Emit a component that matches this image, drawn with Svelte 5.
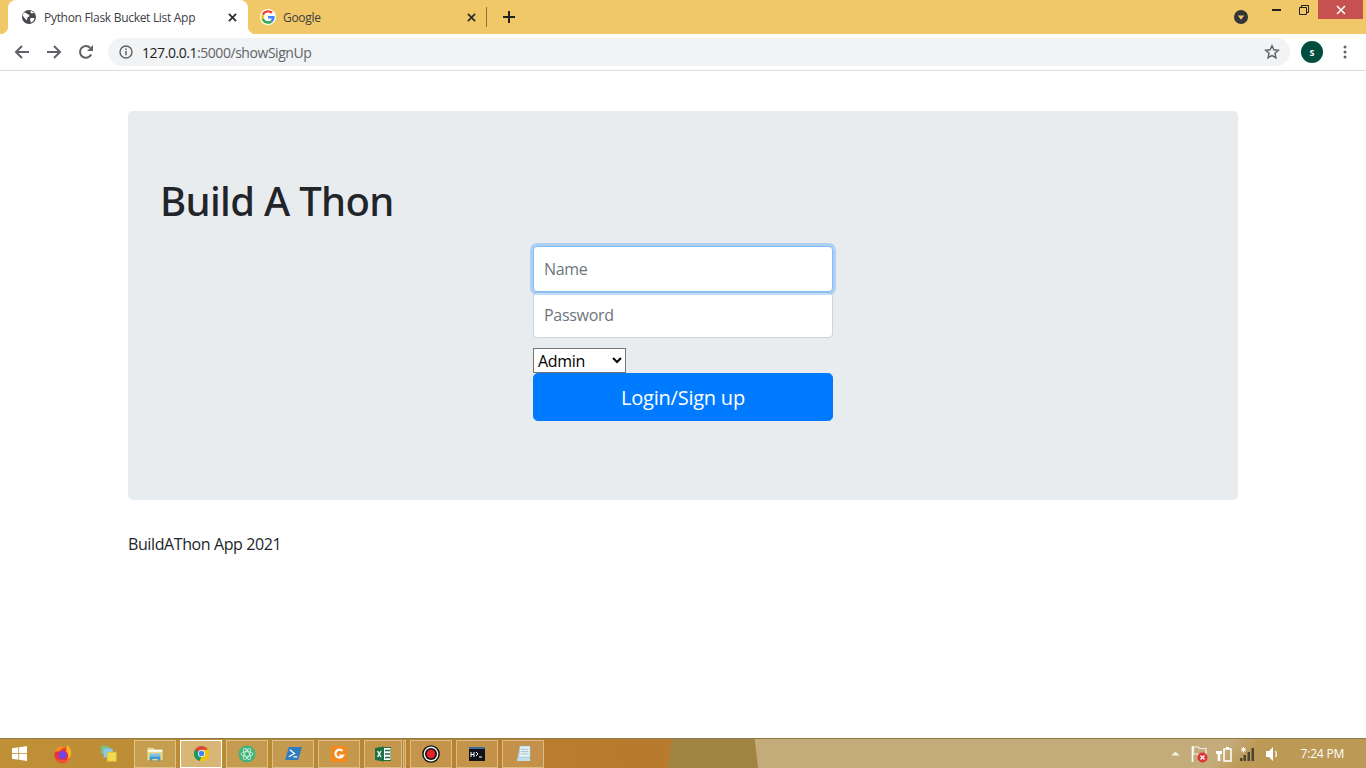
<script lang="ts">
  const role = 'Admin';
</script>

{#snippet closeIcon()}
  <svg class="tab-close" viewBox="0 0 10 10" width="9" height="9">
    <path d="M1 1l8 8M9 1l-8 8" stroke="#2b2b2b" stroke-width="1.900" fill="none" />
  </svg>
{/snippet}

<div class="window">
  <header class="tabstrip">
    <div class="tab active">
      <svg class="favicon" viewBox="0 0 16 16" width="16" height="16">
        <circle cx="8" cy="8" r="7" fill="#45484c" />
        <path d="M3 3.500c2 .2 2.600 1 3.400 1.600.8.600 2 .5 2 1.500S7.500 8 6.600 8.600 6.500 10.500 6 11.500C4.800 10.500 3.500 9.500 2 7c0-1.500.3-2.500 1-3.500zM9.800 1.800c1 .6 2.500 1.400 3.200 2.200-.8.500-2 .4-2.800.2-.7-.3-.9-1.500-.4-2.400zM10 9h3.600c-.3 1.800-1.500 3.500-3.100 4.500-.8-.2-1.200-1.200-1.300-2.200C9 10.200 9.300 9.300 10 9z" fill="#fff" />
      </svg>
      <span class="tab-title">Python Flask Bucket List App</span>
      {@render closeIcon()}
    </div>
    <div class="tab second-tab">
      <svg class="favicon" viewBox="0 0 48 48" width="16" height="16">
        <circle cx="24" cy="24" r="24" fill="#fff" />
        <path fill="#ea4335" d="M24 10.500c3.500 0 6.600 1.200 9 3.500l5.300-5.300C35 5.600 30 3.500 24 3.500 16 3.500 9 8.100 5.600 14.800l6.200 4.800C13.300 14.300 18.200 10.500 24 10.500z" />
        <path fill="#4285f4" d="M44 24.500c0-1.400-.1-2.500-.3-3.600H24v7.500h11.300c-.5 2.600-2 4.800-4.200 6.300l6 4.700C40.700 36 44 30.800 44 24.500z" />
        <path fill="#fbbc05" d="M11.800 28.400c-.4-1.200-.6-2.600-.6-4s.2-2.700.6-4l-6.200-4.800C4.300 18.300 3.500 21.300 3.500 24.500s.8 6.100 2.100 8.800z" />
        <path fill="#34a853" d="M24 44.500c5.500 0 10.200-1.800 13.100-5l-6-4.700c-1.700 1.100-4 1.800-7.100 1.800-5.800 0-10.700-3.800-12.200-9.100l-6.200 4.800C9 39.900 16 44.500 24 44.500z" />
      </svg>
      <span class="tab-title">Google</span>
      {@render closeIcon()}
    </div>
    <span class="tab-sep"></span>
    <svg class="new-tab" viewBox="0 0 14 14" width="14" height="14">
      <path d="M7 1v12M1 7h12" stroke="#222" stroke-width="2" fill="none" />
    </svg>
    <div class="strip-right">
      <svg class="profile-dot" viewBox="0 0 14 14" width="14" height="14">
        <circle cx="7" cy="7" r="7" fill="#333438" />
        <path d="M3.800 5.500h6.400L7 9.700z" fill="#f1c868" />
      </svg>
      <div class="window-btns">
        <span class="win-btn"><span class="minimize"></span></span>
        <span class="win-btn">
          <svg viewBox="0 0 10 10" width="10" height="10">
            <path d="M.5 2.500h7v7h-7zM2.500 2.500v-2h7v7h-2" fill="none" stroke="#222" />
          </svg>
        </span>
        <span class="win-btn close">
          <svg viewBox="0 0 10 10" width="10" height="10">
            <path d="M1 1l8 8M9 1l-8 8" stroke="#fff" stroke-width="1.500" fill="none" />
          </svg>
        </span>
      </div>
    </div>
  </header>

  <nav class="toolbar">
    <svg class="tool" viewBox="0 0 16 16" width="16" height="16">
      <path d="M15 8H2M8 2L2 8l6 6" fill="none" stroke="#5f6368" stroke-width="2" />
    </svg>
    <svg class="tool" viewBox="0 0 16 16" width="16" height="16">
      <path d="M1 8h13M8 2l6 6-6 6" fill="none" stroke="#5f6368" stroke-width="2" />
    </svg>
    <svg class="tool" viewBox="0 0 16 16" width="16" height="16">
      <path d="M13.200 10.500A5.900 5.900 0 1 1 12.200 3.800" fill="none" stroke="#5f6368" stroke-width="2" />
      <path d="M15 1v6H9z" fill="#5f6368" />
    </svg>
    <div class="omnibox">
      <svg viewBox="0 0 14 14" width="14" height="14">
        <circle cx="7" cy="7" r="6" fill="none" stroke="#5f6368" stroke-width="1.400" />
        <path d="M7 6v4.200M7 3.500v1.400" stroke="#5f6368" stroke-width="1.500" />
      </svg>
      <span class="url"><b>127.0.0.1</b>:5000/showSignUp</span>
      <svg class="star" viewBox="0 0 16 16" width="16" height="16">
        <path d="M8 1.800l1.900 4 4.400.5-3.300 3 .9 4.400L8 11.500l-3.900 2.200.9-4.400-3.300-3 4.400-.5z" fill="none" stroke="#5f6368" stroke-width="1.500" />
      </svg>
    </div>
    <span class="avatar">S</span>
    <svg class="menu" viewBox="0 0 4 14" width="4" height="14">
      <circle cx="2" cy="2" r="1.500" fill="#5f6368" />
      <circle cx="2" cy="7" r="1.500" fill="#5f6368" />
      <circle cx="2" cy="12" r="1.500" fill="#5f6368" />
    </svg>
  </nav>

  <main class="page">
    <div class="container">
      <section class="jumbotron">
        <h1>Build A Thon</h1>
        <form class="form-signin" onsubmit={(e) => e.preventDefault()}>
          <input class="form-control focused" type="text" placeholder="Name" />
          <input class="form-control second" type="password" placeholder="Password" />
          <select class="role" value={role}>
            <option>Admin</option>
            <option>User</option>
          </select>
          <button class="btn-primary" type="submit">Login/Sign up</button>
        </form>
      </section>
      <footer class="footer">BuildAThon App 2021</footer>
    </div>
  </main>

  <div class="taskbar">
    <div class="launch">
      <svg class="start" viewBox="0 0 16 16" width="15" height="15">
        <path d="M0 2.400l6.800-1v6.200H0zM7.600 1.300L16 0v7.600H7.600zM0 8.400h6.800v6.200l-6.800-1zM7.600 8.400H16V16l-8.400-1.300z" fill="#fff" />
      </svg>
      <svg class="pin fox" viewBox="0 0 20 20" width="20" height="20">
        <circle cx="9.500" cy="11" r="8" fill="#e8352f" />
        <path d="M2 8c1-4 4-6 7-6 0 2 3 1 4 3-3-1-5 0-6 2z" fill="#f58a22" />
        <path d="M14 1c3 2 5 6 4 10-1 4-3 6-6 7 4-3 4-8 1-11z" fill="#fbb125" />
        <circle cx="9.500" cy="11" r="4" fill="#7542e5" />
        <path d="M3 15c2 3 6 4 9 3 3-1 5-3 6-6-2 3-5 5-8 4-3 0-5-1-7-1z" fill="#f9503f" />
      </svg>
      <svg class="pin stack" viewBox="0 0 20 20" width="18" height="18">
        <rect x="1" y="1" width="9" height="9" fill="#72c482" />
        <rect x="4" y="4" width="10" height="10" fill="#8ec8ef" />
        <rect x="8" y="8" width="10" height="10" fill="#f3dc51" stroke="#d9bf36" />
      </svg>
    </div>

    <div class="task">
      <svg viewBox="0 0 20 18" width="18" height="17">
        <path d="M1 2h7l2 2h9v13H1z" fill="#efd98a" stroke="#b99c50" />
        <rect x="2" y="5" width="16" height="2" fill="#fff" />
        <path d="M4 12h12v5h-3v-2H7v2H4z" fill="#3f9bd8" />
        <rect x="4" y="9" width="12" height="3" fill="#7cc4ee" />
      </svg>
    </div>
    <div class="task current">
      <svg viewBox="0 0 16 16" width="15" height="15">
        <circle cx="8" cy="8" r="8" fill="#db4437" />
        <path d="M8 4h7.500A8 8 0 0 1 6 15.800z" fill="#f4c20d" />
        <path d="M0 8a8 8 0 0 0 6 7.800L8 11 2 3.500A8 8 0 0 0 0 8z" fill="#0f9d58" />
        <circle cx="8" cy="8" r="3.800" fill="#fff" />
        <circle cx="8" cy="8" r="3" fill="#4285f4" />
      </svg>
    </div>
    <div class="task">
      <svg viewBox="0 0 18 18" width="18" height="18">
        <circle cx="9" cy="9" r="8.500" fill="#3fb37b" />
        <g fill="none" stroke="#c9f0d8" stroke-width=".9">
          <ellipse cx="9" cy="9" rx="6" ry="2.400" />
          <ellipse cx="9" cy="9" rx="6" ry="2.400" transform="rotate(60 9 9)" />
          <ellipse cx="9" cy="9" rx="6" ry="2.400" transform="rotate(120 9 9)" />
        </g>
      </svg>
    </div>
    <div class="task">
      <svg viewBox="0 0 18 16" width="17" height="15">
        <path d="M4 1h14l-4 14H0z" fill="#2f7dc0" />
        <path d="M5 4l5 4-6 3.500M9 11.500h4" fill="none" stroke="#fff" stroke-width="1.400" />
      </svg>
    </div>
    <div class="task">
      <svg viewBox="0 0 16 16" width="16" height="16">
        <rect width="16" height="16" fill="#f48a1e" />
        <path d="M11.500 5A4 4 0 1 0 12 9.500H8.500" fill="none" stroke="#fff" stroke-width="2.200" />
      </svg>
    </div>
    <div class="task narrow">
      <svg viewBox="0 0 16 16" width="16" height="16">
        <rect x="5" y="1.500" width="11" height="13" fill="#fff" stroke="#1e7145" />
        <path d="M10 4.500h5M10 8h5M10 11.500h5" stroke="#1e7145" stroke-width="1.500" />
        <path d="M0 2l9-1.500v15L0 14z" fill="#1e7145" />
        <path d="M2.500 5l3.500 6M6 5l-3.500 6" stroke="#fff" stroke-width="1.300" />
      </svg>
    </div>
    <div class="task sliver"></div>
    <div class="task">
      <svg viewBox="0 0 18 18" width="18" height="18">
        <circle cx="9" cy="9" r="8.800" fill="#111" />
        <circle cx="9" cy="9" r="7.400" fill="#f2f2f2" />
        <circle cx="9" cy="9" r="6" fill="#111" />
        <circle cx="9" cy="9" r="4.400" fill="#e8202a" />
      </svg>
    </div>
    <div class="task">
      <svg viewBox="0 0 16 14" width="16" height="14">
        <rect width="16" height="14" fill="#101418" />
        <rect width="16" height="2" fill="#3f6c96" />
        <path d="M2 5v5M5 5v5M2 7.500h3M7 5l2 2-2 2M10 10h3" fill="none" stroke="#fff" stroke-width="1" />
      </svg>
    </div>
    <div class="task">
      <svg viewBox="0 0 16 18" width="15" height="17">
        <path d="M4 2h11v15H1z" fill="#bfe1ec" />
        <path d="M4 1h11v12H3z" fill="#e8f2f6" stroke="#86b3c4" stroke-width=".6" />
        <path d="M5 4.500h8M5 7h8M5 9.500h8" stroke="#7ba6b8" stroke-width=".7" />
      </svg>
    </div>

    <div class="tray">
      <svg class="caret" viewBox="0 0 10 6" width="9" height="5"><path d="M0 5.500L5 .5l5 5z" fill="#f3f0e6" /></svg>
      <svg class="flag" viewBox="0 0 17 18" width="17" height="18">
        <path d="M1.500 1v16" stroke="#fff" stroke-width="1.600" fill="none" />
        <path d="M2.500 2h5l1 1.500H15v7H7.500l-1-1.500h-4z" fill="none" stroke="#f4f1e8" stroke-width="1.200" />
        <circle cx="11.500" cy="12.500" r="5" fill="#e0343a" />
        <path d="M9.500 10.500l4 4M13.500 10.500l-4 4" stroke="#fff" stroke-width="1.400" />
      </svg>
      <svg class="power" viewBox="0 0 16 16" width="16" height="16">
        <path d="M1.500 1v4M4.500 1v4M0 5h6v3H4.300v7H1.700V8H0z" fill="#fff" />
        <rect x="8" y="3" width="7" height="12" fill="none" stroke="#fff" stroke-width="1.500" />
        <rect x="10" y="1" width="3" height="2" fill="#fff" />
      </svg>
      <svg class="signal" viewBox="0 0 16 15" width="16" height="15">
        <path d="M0 12h2.500v3H0zM3.500 9H6v6H3.500zM7.500 6H10v9H7.500zM11.500 2H14v13h-2.500z" fill="#4c4732" />
        <path d="M3.500 1v5.500M1 3.700h5M1.600 1.800l3.800 3.800M5.400 1.800L1.600 5.600" stroke="#fff" stroke-width="1" />
      </svg>
      <svg class="speaker" viewBox="0 0 14 16" width="14" height="16">
        <path d="M1 5h3l4-4v14l-4-4H1z" fill="#fff" />
        <path d="M10.500 5c1.200 2 1.200 4 0 6" fill="none" stroke="#fff" stroke-width="1.200" />
      </svg>
      <span class="clock">7:24 PM</span>
    </div>
  </div>
</div>

<style>
  :global(body) {
    margin: 0;
  }

  .window {
    display: flex;
    flex-direction: column;
    height: 100vh;
    overflow: hidden;
    font-family: 'Open Sans', 'Noto Sans', sans-serif;
    color: #212529;
    background: #fff;
  }

  /* Browser chrome */
  .tabstrip {
    display: flex;
    align-items: center;
    flex: 0 0 34px;
    padding-left: 8px;
    background: #f1c868;
  }

  .tab {
    position: relative;
    display: flex;
    align-items: center;
    gap: 7px;
    box-sizing: border-box;
    width: 239px;
    height: 34px;
    padding: 0 11px 0 13px;
    border-radius: 8px 8px 0 0;
    font-size: 12px;
    color: #3c4043;
  }

  .tab.second-tab {
    padding-left: 12px;
  }

  .tab.active {
    width: 240px;
    background: #fff;
  }

  .tab.active::before,
  .tab.active::after {
    content: '';
    position: absolute;
    bottom: 0;
    width: 8px;
    height: 8px;
  }

  .tab.active::before {
    left: -8px;
    background: radial-gradient(circle at 0 0, transparent 8px, #fff 8.500px);
  }

  .tab.active::after {
    right: -8px;
    background: radial-gradient(circle at 100% 0, transparent 8px, #fff 8.500px);
  }

  .favicon {
    flex: none;
  }

  .tab-title {
    flex: 1;
    white-space: nowrap;
    overflow: hidden;
    letter-spacing: -0.3px;
  }

  .tab-close {
    flex: none;
  }

  .tab-sep {
    width: 1px;
    height: 20px;
    margin-left: -1px;
    background: #8a7440;
  }

  .new-tab {
    margin-left: 15px;
  }

  .strip-right {
    display: flex;
    align-items: flex-start;
    align-self: flex-start;
    margin-left: auto;
    padding-right: 3px;
  }

  .profile-dot {
    margin: 10px 15px 0 0;
  }

  .window-btns {
    display: flex;
    align-items: flex-start;
  }

  .win-btn {
    display: flex;
    align-items: center;
    justify-content: center;
    width: 27px;
    height: 19px;
  }

  .win-btn.close {
    width: 45px;
    margin-left: 1px;
    background: #c75050;
  }

  .minimize {
    width: 9px;
    height: 2px;
    background: #222;
  }

  .toolbar {
    display: flex;
    align-items: center;
    flex: 0 0 36px;
    box-sizing: content-box;
    padding-left: 14px;
    border-bottom: 1px solid #dadce0;
    background: #fff;
  }

  .tool {
    margin-right: 16px;
  }

  .omnibox {
    display: flex;
    align-items: center;
    gap: 9px;
    width: 1182px;
    height: 28px;
    margin-left: -2px;
    padding: 0 10px 0 11px;
    box-sizing: border-box;
    border-radius: 14px;
    background: #f1f3f4;
  }

  .url {
    flex: 1;
    font-size: 14px;
    color: #5f6368;
    letter-spacing: -0.45px;
  }

  .url b {
    font-weight: 400;
    color: #202124;
  }

  .avatar {
    display: flex;
    align-items: center;
    justify-content: center;
    width: 22px;
    height: 22px;
    margin-left: 11px;
    border-radius: 50%;
    font-size: 9px;
    font-weight: 700;
    color: #fff;
    background: #004d40;
  }

  .menu {
    margin-left: 20px;
  }

  /* Page */
  .page {
    flex: 1;
  }

  .container {
    width: 1110px;
    margin: 0 auto;
    padding-top: 40px;
  }

  .jumbotron {
    padding: 64px 32px;
    border-radius: 4.800px;
    background: #e9ecef;
  }

  h1 {
    margin: 0 0 6px;
    padding-top: 2px;
    font-family: 'Noto Sans', 'Open Sans', sans-serif;
    font-size: 40px;
    font-weight: 500;
    line-height: 1.2;
    letter-spacing: -0.67px;
  }

  .form-signin {
    display: block;
    width: 300px;
    box-sizing: border-box;
    margin: 0 auto;
    padding: 15px 0;
  }

  .form-control {
    position: relative;
    display: block;
    width: 100%;
    height: 46px;
    box-sizing: border-box;
    padding: 10px 10px;
    border: 1px solid #ced4da;
    border-radius: 4px;
    outline: none;
    font-family: inherit;
    font-size: 16px;
    letter-spacing: -0.3px;
    color: #495057;
    background: #fff;
  }

  .form-control::placeholder {
    color: #6c757d;
    opacity: 1;
  }

  .form-control.focused {
    z-index: 2;
    border-color: #80bdff;
    box-shadow: 0 0 0 3px rgba(0, 123, 255, 0.25);
  }

  .form-control.second {
    margin-bottom: 10px;
  }

  .role {
    display: block;
    width: 93px;
    height: 25px;
    box-sizing: border-box;
    border: 1px solid #767676;
    border-radius: 0;
    font-family: inherit;
    font-size: 16px;
    letter-spacing: -0.3px;
    color: #000;
    background: #fff;
  }

  .btn-primary {
    display: block;
    width: 100%;
    height: 48px;
    border: 1px solid #007bff;
    border-radius: 4.800px;
    font-family: inherit;
    font-size: 20px;
    letter-spacing: -0.23px;
    color: #fff;
    background: #007bff;
  }

  .footer {
    padding-top: 32px;
    font-size: 16px;
    line-height: 24px;
    letter-spacing: -0.4px;
  }

  /* Windows taskbar */
  .taskbar {
    display: flex;
    align-items: center;
    gap: 4px;
    flex: 0 0 30px;
    box-sizing: border-box;
    border-top: 1px solid #8d7a4c;
    background:
      linear-gradient(130deg, rgba(188, 154, 86, 0) 30px, #bc9a56 52px) right / 172px 100% no-repeat,
      linear-gradient(83deg, rgba(196, 171, 122, 0) 752px, #c4ab7a 753px),
      linear-gradient(97deg, rgba(160, 132, 66, 0) 666px, #a08442 667px),
      linear-gradient(90deg, #bf9036 0, #b98a35 280px, #b87a2c 640px);
  }

  .launch {
    display: flex;
    align-items: center;
    width: 130px;
    flex: none;
    padding-left: 12px;
    box-sizing: border-box;
  }

  .pin.fox {
    margin-left: 26px;
  }

  .pin.stack {
    margin-left: 27px;
  }

  .task {
    display: flex;
    align-items: center;
    justify-content: center;
    flex: none;
    box-sizing: border-box;
    width: 42px;
    height: 28px;
    border: 1px solid rgba(240, 222, 180, 0.55);
    background: rgba(255, 240, 210, 0.17);
  }

  .task.current {
    border-color: #fff;
    background: rgba(255, 240, 210, 0.42);
  }

  .task.narrow {
    width: 38px;
    margin-right: -3px;
  }

  .task.sliver {
    width: 3px;
  }

  .tray {
    display: flex;
    align-items: center;
    margin-left: auto;
    padding-right: 22px;
  }

  .flag {
    margin-left: 11px;
  }

  .power {
    margin-left: 8px;
  }

  .signal {
    margin-left: 8px;
  }

  .speaker {
    margin-left: 9px;
  }

  .clock {
    margin-left: 22px;
    font-size: 12px;
    color: #fff;
    letter-spacing: -0.2px;
  }
</style>
